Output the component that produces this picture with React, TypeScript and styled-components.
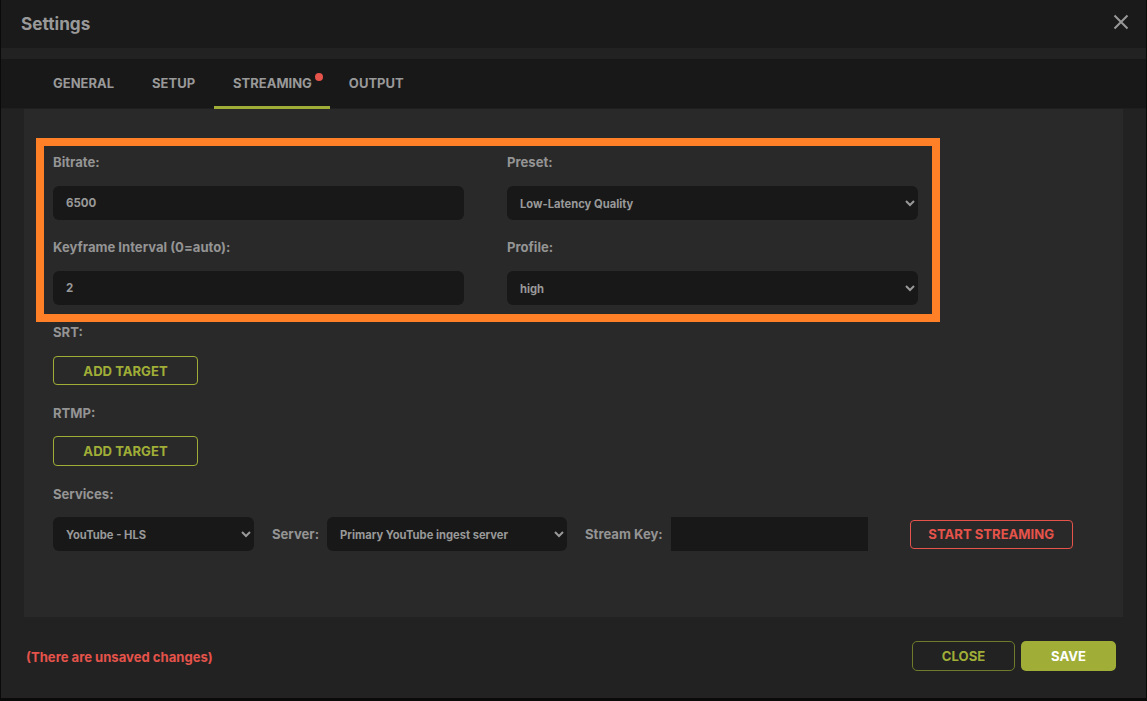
import React from 'react';
import styled, { createGlobalStyle } from 'styled-components';

const GlobalStyle = createGlobalStyle`
	html, body {
		margin: 0;
		padding: 0;
		height: 100%;
		background: #0a0a0a;
		overflow: hidden;
	}
	* {
		box-sizing: border-box;
		font-family: Inter, 'Liberation Sans', sans-serif;
	}
`;

const Dialog = styled.div`
	position: relative;
	width: 1145px;
	height: 698px;
	margin-left: 1px;
	display: flex;
	flex-direction: column;
	background: #222222;
`;

const Header = styled.header`
	height: 48px;
	padding: 0 20px;
	display: flex;
	align-items: center;
	justify-content: space-between;
	background: #1a1a1a;
`;

const Title = styled.h1`
	margin: 0 0 1px;
	font-size: 17.2px;
	font-weight: 700;
	color: #999999;
`;

const CloseIcon = styled.button`
	padding: 0;
	margin: 0 -3px 5px 0;
	width: 16px;
	height: 16px;
	border: none;
	background: none;
	color: #999999;
	display: flex;
`;

const Tabs = styled.nav`
	height: 50px;
	margin-top: 11px;
	padding-left: 33px;
	display: flex;
	background: #181818;
	border-bottom: 1px solid #1f1f1f;
`;

const Tab = styled.div<{ $active?: boolean }>`
	position: relative;
	padding: 0 ${(p) => (p.$active ? 18 : 19)}px 0 19px;
	display: flex;
	align-items: center;
	font-size: 13px;
	font-weight: 700;
	color: #999999;
	border-bottom: 3px solid ${(p) => (p.$active ? '#a0ae37' : 'transparent')};
	margin-bottom: -1px;
`;

const Dot = styled.span`
	position: absolute;
	top: 14px;
	right: 7px;
	width: 8px;
	height: 8px;
	border-radius: 50%;
	background: #e5534b;
`;

const Body = styled.main`
	flex: 1;
	padding: 0 23px;
	display: flex;
`;

const Panel = styled.section`
	flex: 1;
	padding: 44px 29px 0;
	background: #292929;
`;

const FieldGrid = styled.div`
	width: 865px;
	display: grid;
	grid-template-columns: 411px 411px;
	column-gap: 43px;
	row-gap: 18px;
`;

const Field = styled.div`
	display: flex;
	flex-direction: column;
`;

const Label = styled.label`
	height: 33px;
	font-size: 13.1px;
	line-height: 19px;
	font-weight: 700;
	color: #949494;
`;

const Input = styled.input`
	height: 34px;
	padding: 0 13px;
	border: none;
	border-radius: 6px;
	background: #181818;
	font-size: 11.5px;
	font-weight: 700;
	color: #999999;
	outline: none;
`;

const Select = styled.select<{ $width?: number }>`
	height: 34px;
	width: ${(p) => (p.$width ? `${p.$width}px` : 'auto')};
	padding: 1px 8px 0 9px;
	border: none;
	border-radius: 6px;
	background: #181818;
	font-size: 11.2px;
	font-weight: 700;
	color: #999999;
	outline: none;
`;

const Section = styled.div`
	margin-top: 17px;
	& + & {
		margin-top: 18px;
	}
`;

const SectionLabel = styled.div<{ $tall?: boolean }>`
	height: ${(p) => (p.$tall ? 34 : 33)}px;
	padding-top: 1px;
	font-size: 13.1px;
	line-height: 19px;
	font-weight: 700;
	color: #949494;
`;

const OutlineButton = styled.button<{ $tall?: boolean }>`
	display: block;
	width: 145px;
	height: ${(p) => (p.$tall ? 30 : 29)}px;
	padding: 0;
	border: 1px solid #a0ae37;
	border-radius: 4px;
	background: transparent;
	font-size: 13.1px;
	font-weight: 700;
	color: #a0ae37;
`;

const ServiceRow = styled.div`
	display: flex;
	align-items: center;
	height: 34px;
`;

const InlineLabel = styled.label<{ $gap: number }>`
	margin: 0 ${(p) => p.$gap}px 0 18px;
	font-size: 13.1px;
	font-weight: 700;
	color: #949494;
	white-space: nowrap;
`;

const KeyInput = styled.input`
	width: 197px;
	height: 34px;
	border: none;
	background: #181818;
	outline: none;
`;

const StartButton = styled.button`
	margin-left: 42px;
	width: 163px;
	height: 29px;
	padding: 0;
	border: 1px solid #e5534b;
	border-radius: 4px;
	background: transparent;
	font-size: 13.1px;
	font-weight: 700;
	color: #e5534b;
`;

const Footer = styled.footer`
	height: 81px;
	padding: 0 30px 3px 25px;
	display: flex;
	align-items: center;
	justify-content: space-between;
`;

const Unsaved = styled.span`
	margin-top: 2px;
	font-size: 13.1px;
	font-weight: 700;
	color: #e5534b;
`;

const FooterButtons = styled.div`
	display: flex;
	gap: 6px;
`;

const CloseButton = styled.button`
	width: 103px;
	height: 30px;
	padding: 0;
	border: 1px solid #6f7a2b;
	border-radius: 5px;
	background: transparent;
	font-size: 13.1px;
	font-weight: 700;
	color: #a0ae37;
`;

const SaveButton = styled.button`
	width: 95px;
	height: 30px;
	padding: 0;
	border: none;
	border-radius: 5px;
	background: #a0ae37;
	font-size: 13.1px;
	font-weight: 700;
	color: #ffffff;
`;

const Highlight = styled.div`
	position: absolute;
	left: 35px;
	top: 138px;
	width: 904px;
	height: 184px;
	border: 8px solid #ff8026;
	pointer-events: none;
`;

const App = () => {
	return (
		<>
			<GlobalStyle />
			<Dialog>
				<Header>
					<Title>Settings</Title>
					<CloseIcon aria-label="Close">
						<svg width="16" height="16" viewBox="0 0 16 16" fill="none" stroke="currentColor" strokeWidth="2">
							<path d="M1.5 1.5 L14.5 14.5 M14.5 1.5 L1.5 14.5" />
						</svg>
					</CloseIcon>
				</Header>
				<Tabs>
					<Tab>GENERAL</Tab>
					<Tab>SETUP</Tab>
					<Tab $active>
						STREAMING
						<Dot />
					</Tab>
					<Tab>OUTPUT</Tab>
				</Tabs>
				<Body>
					<Panel>
						<FieldGrid>
							<Field>
								<Label>Bitrate:</Label>
								<Input defaultValue="6500" />
							</Field>
							<Field>
								<Label>Preset:</Label>
								<Select defaultValue="Low-Latency Quality">
									<option>Low-Latency Quality</option>
								</Select>
							</Field>
							<Field>
								<Label>Keyframe Interval (0=auto):</Label>
								<Input defaultValue="2" />
							</Field>
							<Field>
								<Label>Profile:</Label>
								<Select defaultValue="high">
									<option>high</option>
								</Select>
							</Field>
						</FieldGrid>
						<Section>
							<SectionLabel $tall>SRT:</SectionLabel>
							<OutlineButton>ADD TARGET</OutlineButton>
						</Section>
						<Section>
							<SectionLabel>RTMP:</SectionLabel>
							<OutlineButton $tall>ADD TARGET</OutlineButton>
						</Section>
						<Section>
							<SectionLabel>Services:</SectionLabel>
							<ServiceRow>
								<Select $width={201} defaultValue="YouTube - HLS">
									<option>YouTube - HLS</option>
								</Select>
								<InlineLabel $gap={8}>Server:</InlineLabel>
								<Select $width={240} defaultValue="Primary YouTube ingest server">
									<option>Primary YouTube ingest server</option>
								</Select>
								<InlineLabel $gap={8}>Stream Key:</InlineLabel>
								<KeyInput />
								<StartButton>START STREAMING</StartButton>
							</ServiceRow>
						</Section>
					</Panel>
				</Body>
				<Footer>
					<Unsaved>(There are unsaved changes)</Unsaved>
					<FooterButtons>
						<CloseButton>CLOSE</CloseButton>
						<SaveButton>SAVE</SaveButton>
					</FooterButtons>
				</Footer>
				<Highlight />
			</Dialog>
		</>
	);
};

export default App;
